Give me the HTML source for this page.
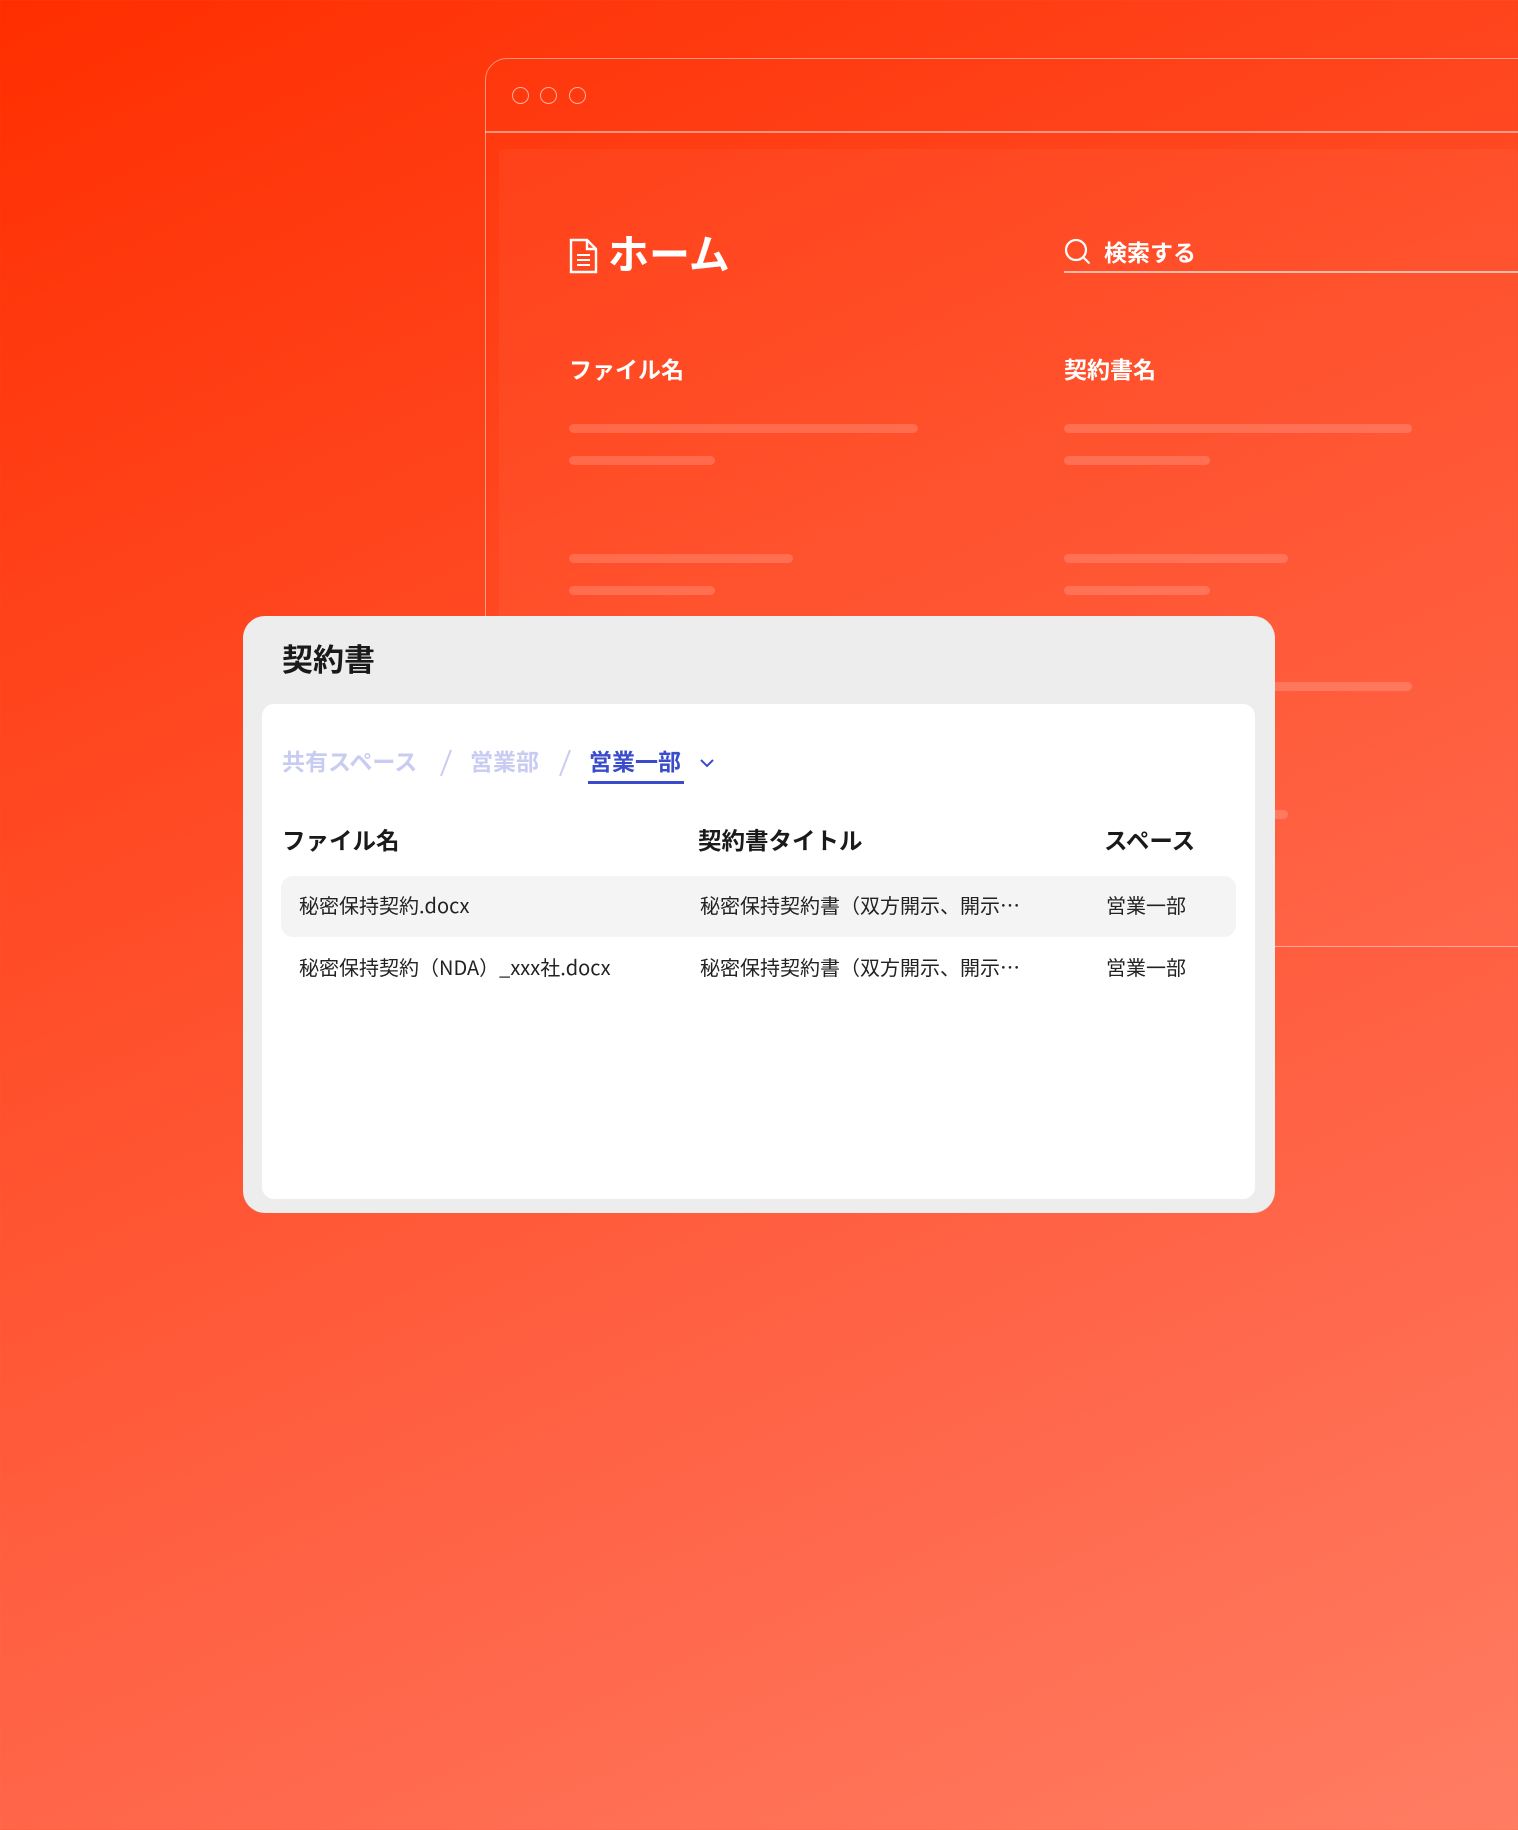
<!DOCTYPE html>
<html><head><meta charset="utf-8"><style>
*{margin:0;padding:0;box-sizing:border-box}
body{width:1518px;height:1830px;overflow:hidden;position:relative;font-family:"Liberation Sans","Noto Sans CJK JP",sans-serif;background:linear-gradient(155deg,#ff2e00 0%,#ff4a24 35%,#ff6447 70%,#ff7d63 100%)}
.abs{position:absolute}
.frame{left:485px;top:58px;width:1100px;height:889px;border:1.5px solid rgba(255,255,255,0.45);border-radius:22px;}
.hline{left:485px;top:131px;width:1033px;height:1.5px;background:rgba(255,255,255,0.45)}
.dot{width:17px;height:17px;border:1.5px solid rgba(255,255,255,0.6);border-radius:50%;top:87px}
.panel{left:499px;top:149px;width:1019px;height:798px;background:rgba(255,255,255,0.04);border-radius:4px}
.w{color:#fff;font-weight:700}
.bar{height:9px;border-radius:5px;background:rgba(255,255,255,0.17)}
.card{left:243px;top:616px;width:1032px;height:597px;background:#ededed;border-radius:22px}
.inner{left:262px;top:704px;width:993px;height:495px;background:#fff;border-radius:12px}
.t{font-size:20px;color:#222;top:892px;font-family:"Noto Sans CJK JP","Liberation Sans",sans-serif;line-height:26px}
.bc{top:746px;font-size:23px;line-height:32px;font-weight:700;color:#c8ccf2;white-space:nowrap}
.h{top:826px;font-size:23.5px;font-weight:700;color:#1a1a1a;line-height:30px}
</style></head><body>
<div class="abs frame"></div>
<div class="abs hline"></div>
<div class="abs dot" style="left:512px"></div>
<div class="abs dot" style="left:540px"></div>
<div class="abs dot" style="left:569px"></div>
<div class="abs panel"></div>
<svg class="abs" style="left:569px;top:238px" width="30" height="36" viewBox="0 0 30 36" fill="none" stroke="#fff" stroke-width="2.4"><path d="M2 2h16l9 9v23H2z"/><path d="M18 2v9h9"/><path d="M8 17h13M8 22h13M8 27h13" stroke-width="2"/></svg>
<div class="abs w" style="left:608px;top:230px;font-size:41px;line-height:50px">ホーム</div>
<svg class="abs" style="left:1064px;top:238px" width="30" height="30" viewBox="0 0 30 30" fill="none" stroke="#fff" stroke-width="2.2"><circle cx="12" cy="12" r="10"/><path d="M19.5 19.5l6 6"/></svg>
<div class="abs w" style="left:1104px;top:238px;font-size:23px;line-height:30px">検索する</div>
<div class="abs" style="left:1064px;top:271px;width:454px;height:1.5px;background:rgba(255,255,255,0.6)"></div>
<div class="abs w" style="left:569px;top:355px;font-size:23px;line-height:30px">ファイル名</div>
<div class="abs w" style="left:1064px;top:355px;font-size:23px;line-height:30px">契約書名</div>
<div class="abs bar" style="left:569px;top:424px;width:349px"></div>
<div class="abs bar" style="left:569px;top:456px;width:146px"></div>
<div class="abs bar" style="left:569px;top:554px;width:224px"></div>
<div class="abs bar" style="left:569px;top:586px;width:146px"></div>
<div class="abs bar" style="left:1064px;top:424px;width:348px"></div>
<div class="abs bar" style="left:1064px;top:456px;width:146px"></div>
<div class="abs bar" style="left:1064px;top:554px;width:224px"></div>
<div class="abs bar" style="left:1064px;top:586px;width:146px"></div>
<div class="abs bar" style="left:1064px;top:682px;width:348px"></div>
<div class="abs bar" style="left:1064px;top:810px;width:224px"></div>
<div class="abs card"></div>
<div class="abs" style="left:282px;top:641px;font-size:31px;font-weight:700;color:#1a1a1a;line-height:40px">契約書</div>
<div class="abs inner"></div>
<div class="abs bc" style="left:282px">共有スペース</div>
<svg class="abs" style="left:436px;top:748px" width="20" height="30" viewBox="0 0 20 30" fill="none" stroke="#c8ccf2" stroke-width="2"><path d="M15 2L5 28"/></svg>
<div class="abs bc" style="left:470px">営業部</div>
<svg class="abs" style="left:555px;top:748px" width="20" height="30" viewBox="0 0 20 30" fill="none" stroke="#c8ccf2" stroke-width="2"><path d="M15 2L5 28"/></svg>
<div class="abs bc" style="left:589px;color:#3a4ccb">営業一部</div>
<div class="abs" style="left:588px;top:781px;width:96px;height:3px;background:#3a4ccb"></div>
<svg class="abs" style="left:698px;top:756px" width="18" height="14" viewBox="0 0 18 14" fill="none" stroke="#3a4ccb" stroke-width="2"><path d="M3 4l6 6 6-6"/></svg>
<div class="abs h" style="left:282px">ファイル名</div>
<div class="abs h" style="left:698px">契約書タイトル</div>
<div class="abs h" style="left:1104px">スペース</div>
<div class="abs" style="left:281px;top:876px;width:955px;height:61px;background:#f4f4f4;border-radius:12px"></div>
<div class="abs t" style="left:299px">秘密保持契約.docx</div>
<div class="abs t" style="left:700px">秘密保持契約書（双方開示、開示…</div>
<div class="abs t" style="left:1106px">営業一部</div>
<div class="abs t" style="left:299px;top:954px">秘密保持契約（NDA）_xxx社.docx</div>
<div class="abs t" style="left:700px;top:954px">秘密保持契約書（双方開示、開示…</div>
<div class="abs t" style="left:1106px;top:954px">営業一部</div>
</body></html>
